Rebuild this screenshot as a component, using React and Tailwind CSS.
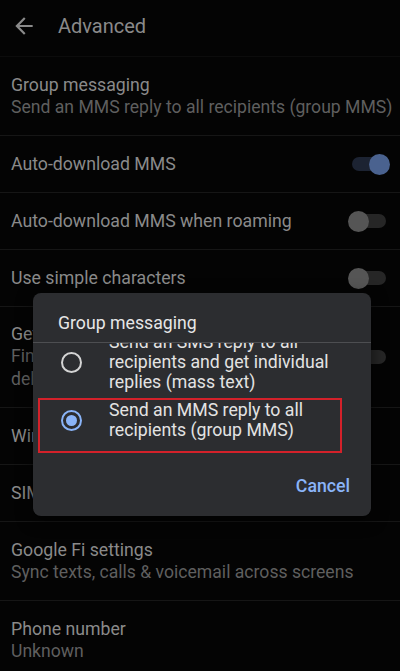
import React from 'react';

const rows = [
  { title: 'Group messaging', sub: ['Send an MMS reply to all recipients (group MMS)'] },
  { title: 'Auto-download MMS', toggle: true, on: true },
  { title: 'Auto-download MMS when roaming', toggle: true },
  { title: 'Use simple characters', toggle: true },
  { title: 'Get SMS delivery reports', sub: ['Find out whether each SMS you send was', 'delivered'], toggle: true },
  { title: 'Wireless emergency alerts' },
  { title: 'SIM card messages' },
  { title: 'Google Fi settings', sub: ['Sync texts, calls & voicemail across screens'] },
  { title: 'Phone number', sub: ['Unknown'] },
];

function Toggle({ on }) {
  return (
    <div className="relative w-[42px] h-[21px] shrink-0 flex items-center justify-center">
      <div className={`w-[34px] h-[14px] rounded-full ${on ? 'bg-[#1c2332]' : 'bg-[#262626]'}`} />
      <div
        className={`absolute top-0 w-[21px] h-[21px] rounded-full ${
          on ? 'right-0 bg-[#4a628f]' : 'left-0 bg-[#555555]'
        }`}
      />
    </div>
  );
}

function Row({ row }) {
  const lines = row.sub ? row.sub.length : 0;
  const height = lines === 0 ? 'h-[57px]' : lines === 1 ? 'h-[79px]' : 'h-[101px]';
  return (
    <div className={`${height} flex items-center justify-between pl-[11px] pr-[10px] border-b border-[#161616]`}>
      <div className="flex flex-col min-w-0">
        <span className="text-[17.7px] leading-[22px] text-[#8a8a8a] whitespace-nowrap">{row.title}</span>
        {row.sub &&
          row.sub.map(s => (
            <span key={s} className="text-[17.6px] leading-[23px] text-[#5f5f5f] whitespace-nowrap">
              {s}
            </span>
          ))}
      </div>
      {row.toggle && <Toggle on={row.on} />}
    </div>
  );
}

function Radio({ checked }) {
  return (
    <div
      className={`w-[21px] h-[21px] rounded-full border-2 flex items-center justify-center shrink-0 ${
        checked ? 'border-[#8ab4f8]' : 'border-[#d4d4d4]'
      }`}
    >
      {checked && <div className="w-[11px] h-[11px] rounded-full bg-[#8ab4f8]" />}
    </div>
  );
}

const options = [
  { lines: ['Send an SMS reply to all', 'recipients and get individual', 'replies (mass text)'] },
  { lines: ['Send an MMS reply to all', 'recipients (group MMS)'], checked: true },
];

export default function App() {
  return (
    <div className="relative w-[400px] h-[671px] overflow-hidden bg-[#040404] font-['Roboto',sans-serif]">
      {/* Top bar */}
      <header className="h-[57px] flex items-center border-b border-[#0c0c0c]">
        <svg width="26" height="26" viewBox="0 0 24 24" className="ml-[11px] -mt-[5px]" fill="#8a8a8a">
          <path d="M20 11H7.83l5.59-5.59L12 4l-8 8 8 8 1.41-1.41L7.83 13H20v-2z" />
        </svg>
        <span className="ml-[21px] -mt-[5px] text-[20px] text-[#8a8a8a]">Advanced</span>
      </header>

      {/* Settings list */}
      <div className="flex flex-col">
        {rows.map(r => (
          <Row key={r.title} row={r} />
        ))}
      </div>

      {/* Dialog */}
      <div className="absolute left-[33px] top-[293px] w-[338px] h-[223px] rounded-[8px] bg-[#2c2d30] shadow-[0_4px_16px_rgba(0,0,0,0.6)] flex flex-col">
        <div className="pl-[25px] pt-[19px] pb-[8px] text-[17.7px] leading-[22px] text-[#e6e6e6]">Group messaging</div>
        <div className="h-px bg-[#4d4e51]" />
        <div className="h-[120px] overflow-hidden">
          <div className="-mt-[15px] flex flex-col">
            {options.map((o, i) => (
              <div key={i} className="flex items-center py-[4px]">
                <div className="w-[76px] flex justify-center pl-[1px]">
                  <Radio checked={o.checked} />
                </div>
                <div className="flex flex-col">
                  {o.lines.map(l => (
                    <span key={l} className="text-[17.7px] leading-[20px] text-[#e3e3e3] whitespace-nowrap">
                      {l}
                    </span>
                  ))}
                </div>
              </div>
            ))}
          </div>
        </div>
        <div className="flex-1 flex items-center justify-end pr-[21px] pb-[6px]">
          <span className="text-[17.7px] font-medium text-[#8ab4f8]">Cancel</span>
        </div>

        {/* Highlight box */}
        <div className="absolute left-[5px] top-[105px] w-[304px] h-[55px] border-[2.5px] border-[#d4212a]" />
      </div>
    </div>
  );
}
